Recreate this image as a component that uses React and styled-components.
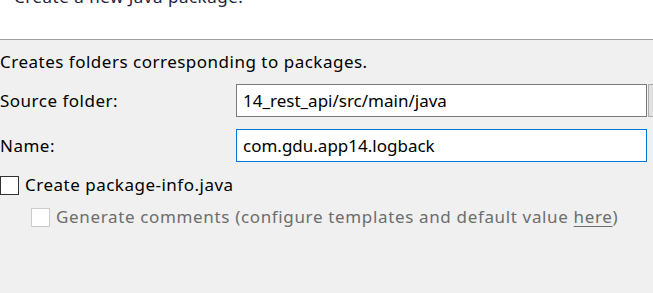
import React from "react";
import styled, { createGlobalStyle } from "styled-components";

const Global = createGlobalStyle`
  html, body {
    margin: 0;
    padding: 0;
    background: #f0f0f0;
    overflow: hidden;
  }
  body {
    font-family: "Noto Sans", "Noto Sans CJK KR", sans-serif;
    font-size: 17px;
    color: #000;
  }
`;

const Page = styled.div`
  width: 653px;
  height: 293px;
  display: flex;
  flex-direction: column;
  background: #f0f0f0;
  letter-spacing: 0.5px;
`;

const Header = styled.div`
  height: 39px;
  background: #fff;
  border-bottom: 1px solid #a0a0a0;
  display: flex;
  align-items: flex-start;
  padding-left: 14px;
`;

const Title = styled.div`
  margin-top: -15px;
  line-height: 24px;
  color: #1e1e3c;
`;

const Body = styled.div`
  display: flex;
  flex-direction: column;
  padding-top: 10px;
`;

const Description = styled.div`
  line-height: 24px;
  height: 26px;
`;

const Form = styled.div`
  display: grid;
  grid-template-columns: 236px 411px 6px;
  row-gap: 12px;
  align-items: center;
  margin-top: 8px;
`;

const Label = styled.div`
  line-height: 24px;
`;

const Field = styled.div`
  height: 33px;
  box-sizing: border-box;
  background: #fff;
  border: 1px solid ${p => (p.focused ? "#0078d7" : "#7a7a7a")};
  display: flex;
  align-items: center;
  padding-left: 6px;
  line-height: 24px;
  letter-spacing: 0;
`;

const Browse = styled.div`
  height: 33px;
  box-sizing: border-box;
  margin-left: 1px;
  background: #e1e1e1;
  border: 1px solid #adadad;
  border-right: none;
`;

const CheckRow = styled.label`
  display: flex;
  align-items: center;
  gap: 6px;
  height: 24px;
  margin-top: ${p => p.gap || 0}px;
  margin-left: ${p => p.indent || 0}px;
  color: ${p => (p.disabled ? "#6d6d6d" : "#000")};
  letter-spacing: ${p => (p.disabled ? "0.65px" : "0.5px")};
  line-height: 24px;
`;

const Box = styled.span`
  width: 19px;
  height: 19px;
  box-sizing: border-box;
  background: #fff;
  border: 1px solid ${p => (p.disabled ? "#cccccc" : "#333")};
  flex: none;
`;

const Link = styled.span`
  text-decoration: underline;
  text-underline-offset: 3px;
`;

export default function App() {
  return (
    <Page>
      <Global />
      <Header>
        <Title>Create a new Java package.</Title>
      </Header>
      <Body>
        <Description>Creates folders corresponding to packages.</Description>
        <Form>
          <Label>Source folder:</Label>
          <Field>14_rest_api/src/main/java</Field>
          <Browse />
          <Label>Name:</Label>
          <Field focused>com.gdu.app14.logback</Field>
          <div />
        </Form>
        <CheckRow gap={11}>
          <Box />
          <span>Create package-info.java</span>
        </CheckRow>
        <CheckRow indent={31} gap={8} disabled>
          <Box disabled />
          <span>
            Generate comments (configure templates and default value <Link>here</Link>)
          </span>
        </CheckRow>
      </Body>
    </Page>
  );
}
